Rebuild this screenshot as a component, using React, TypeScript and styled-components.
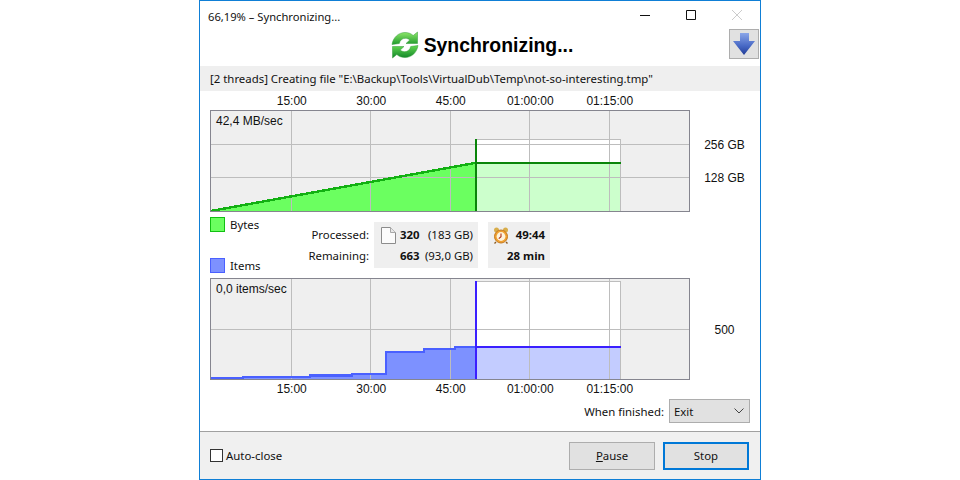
import styled, { createGlobalStyle } from "styled-components"

const GlobalStyle = createGlobalStyle`
  html, body {
    margin: 0;
    background: #ffffff;
  }
  * {
    box-sizing: border-box;
  }
`

const uiFont = `"Noto Sans", "Liberation Sans", sans-serif`
const chartFont = `"Liberation Sans", Arial, sans-serif`

const Window = styled.div`
  width: 562px;
  height: 480px;
  margin-left: 199px;
  border: 1px solid #0f7fd6;
  background: #ffffff;
  display: flex;
  flex-direction: column;
  font: 11.4px ${uiFont};
  color: #111111;
`

const TitleBar = styled.div`
  height: 28px;
  flex: none;
  display: flex;
  align-items: center;
  padding-left: 8px;
`

const TitleText = styled.div`
  flex: 1;
  margin-top: 2px;
  font-size: 11.2px;
`

const WindowButton = styled.div`
  width: 46px;
  height: 27px;
  display: flex;
  align-items: center;
  justify-content: center;
`

const Header = styled.div`
  height: 37px;
  flex: none;
  display: grid;
  grid-template-columns: 1fr auto 1fr;
  align-items: center;
  padding: 0 1px 7px 5px;
`

const Heading = styled.div`
  grid-column: 2;
  display: flex;
  align-items: center;
  gap: 5px;
  margin-top: 2px;
  font: bold 19.4px ${chartFont};
  color: #000000;
`

const DownButton = styled.button`
  grid-column: 3;
  justify-self: end;
  width: 30px;
  height: 30px;
  margin: 0;
  padding: 0;
  border: 1px solid #adadad;
  background: #e1e1e1;
  display: flex;
  align-items: center;
  justify-content: center;
`

const StatusLine = styled.div`
  height: 25px;
  flex: none;
  display: flex;
  align-items: center;
  padding-left: 10px;
  background: #efefef;
`

const Axis = styled.div<{ $shift: number }>`
  height: 19px;
  flex: none;
  display: flex;
  align-items: center;
  padding-left: 52px;
  padding-top: ${({ $shift }) => Math.max($shift, 0)}px;
  padding-bottom: ${({ $shift }) => Math.max(-$shift, 0)}px;
  font: 12px ${chartFont};
`

const AxisTick = styled.div`
  width: 79.5px;
  text-align: center;
`

const ChartRow = styled.div`
  height: 102px;
  flex: none;
  display: flex;
  padding-left: 10px;
  font: 12px ${chartFont};
`

const ChartBox = styled.div`
  width: 480px;
  height: 102px;
  flex: none;
  position: relative;
`

const ChartSvg = styled.svg`
  display: block;
`

const Rate = styled.div`
  position: absolute;
  left: 6px;
  top: 4px;
`

const ScaleColumn = styled.div<{ $top: number; $gap: number }>`
  width: 69px;
  display: flex;
  flex-direction: column;
  align-items: center;
  gap: ${({ $gap }) => $gap}px;
  padding-top: ${({ $top }) => $top}px;
`

const Middle = styled.div`
  height: 66px;
  flex: none;
  display: flex;
  padding-left: 10px;
`

const Legend = styled.div`
  width: 90px;
  flex: none;
  display: flex;
  flex-direction: column;
  gap: 26px;
  padding-top: 5px;
`

const LegendItem = styled.div`
  display: flex;
  align-items: center;
  gap: 5px;
  height: 15px;
`

const Swatch = styled.div<{ $fill: string; $edge: string }>`
  width: 15px;
  height: 15px;
  background: ${({ $fill }) => $fill};
  border: 1px solid ${({ $edge }) => $edge};
`

const StatLabels = styled.div`
  width: 69px;
  flex: none;
  display: flex;
  flex-direction: column;
  align-items: flex-end;
  gap: 5px;
  padding-top: 15px;
`

const StatLabel = styled.div`
  height: 16px;
  line-height: 16px;
`

const Panel = styled.div<{ $width: number; $left: number; $pad: number }>`
  width: ${({ $width }) => $width}px;
  height: 46px;
  margin: 10px 0 0 ${({ $left }) => $left}px;
  background: #efefef;
  display: flex;
  padding: 0 5px 0 ${({ $pad }) => $pad}px;
`

const PanelIcon = styled.div<{ $width: number }>`
  width: ${({ $width }) => $width}px;
  flex: none;
  padding-top: 5px;
`

const PanelRows = styled.div`
  flex: 1;
  display: flex;
  flex-direction: column;
  gap: 5px;
  padding-top: 5px;
`

const PanelRow = styled.div`
  height: 16px;
  line-height: 16px;
  display: flex;
  justify-content: flex-end;
  white-space: nowrap;
`

const Strong = styled.span`
  font-weight: bold;
`

const Size = styled.span`
  margin-left: auto;
`

const FinishRow = styled.div`
  height: 24px;
  flex: none;
  display: flex;
  align-items: center;
  justify-content: flex-end;
  gap: 5px;
  padding-right: 10px;
`

const FinishSelect = styled.div`
  width: 81px;
  height: 24px;
  border: 1px solid #adadad;
  background: #e1e1e1;
  display: flex;
  align-items: center;
  justify-content: space-between;
  padding: 0 5px 0 4px;
`

const Footer = styled.div`
  margin-top: auto;
  height: 48px;
  flex: none;
  border-top: 1px solid #a0a0a0;
  background: #f0f0f0;
  display: flex;
  align-items: center;
  padding: 0 11px 0 10px;
`

const CheckLabel = styled.label`
  display: flex;
  align-items: center;
  gap: 3px;
  margin-right: auto;
`

const CheckBox = styled.span`
  width: 13px;
  height: 13px;
  border: 1px solid #333333;
  background: #ffffff;
`

const FooterButton = styled.button<{ $primary?: boolean }>`
  width: 86px;
  height: 28px;
  margin: 0 0 0 8px;
  padding: 0;
  font: inherit;
  color: #111111;
  background: #e1e1e1;
  border: ${({ $primary }) => ($primary ? "2px solid #0078d7" : "1px solid #adadad")};
`

const Mnemonic = styled.span`
  text-decoration: underline;
`

type Colors = { fill: string; line: string; now: string; future: string }

const bytesColors: Colors = { fill: "#6bff60", line: "#12b012", now: "#0a850a", future: "#ccffcc" }
const itemsColors: Colors = { fill: "#7d91ff", line: "#4a60ff", now: "#3a1fff", future: "#c3ccff" }

const timeLines = [291, 370, 450, 529, 609]
const timeTicks = ["15:00", "30:00", "45:00", "01:00:00", "01:15:00"]

type ChartProps = {
  top: number
  rows: number[]
  futureTop: number
  level: number
  points: string
  colors: Colors
  rate: string
}

// viewBox is set to page pixels so the numbers below can be read off the screenshot
const Chart = ({ top, rows, futureTop, level, points, colors, rate }: ChartProps): JSX.Element => {
  const bottom = top + 101
  return (
    <ChartBox>
      <ChartSvg width={480} height={102} viewBox={`210 ${top} 480 102`} shapeRendering="crispEdges">
        <rect x={210} y={top} width={480} height={102} fill="#efefef" />
        <rect x={476} y={futureTop} width={144} height={bottom - futureTop} fill="#ffffff" />
        <rect x={476} y={level} width={144} height={bottom - level} fill={colors.future} />
        <polygon points={`${points} 475,${bottom} 211,${bottom}`} fill={colors.fill} />
        {rows.map((y) => <rect key={y} x={211} y={y} width={478} height={1} fill="#bdbdbd" />)}
        {timeLines.map((x) => <rect key={x} x={x} y={top} width={1} height={101} fill="#bdbdbd" />)}
        <polyline points={points} fill="none" stroke={colors.line} strokeWidth={2.4} />
        <rect x={476} y={futureTop} width={144} height={1} fill="#bdbdbd" />
        <rect x={620} y={futureTop} width={1} height={bottom - futureTop} fill="#bdbdbd" />
        <rect x={476} y={level - 1} width={145} height={2} fill={colors.now} />
        <rect x={475} y={futureTop} width={2} height={bottom - futureTop} fill={colors.now} />
        <rect x={210.5} y={top + 0.5} width={479} height={101} fill="none" stroke="#85858f" />
      </ChartSvg>
      <Rate>{rate}</Rate>
    </ChartBox>
  )
}

const TimeAxis = ({ shift }: { shift: number }): JSX.Element => (
  <Axis $shift={shift}>
    {timeTicks.map((tick) => <AxisTick key={tick}>{tick}</AxisTick>)}
  </Axis>
)

const SyncIcon = (): JSX.Element => (
  <svg width={28} height={28} viewBox="0 0 28 28">
    <defs>
      <linearGradient id="syncTop" x1="0" y1="0" x2="0" y2="1">
        <stop offset="0" stopColor="#8fe86a" />
        <stop offset="1" stopColor="#1f9a2c" />
      </linearGradient>
      <linearGradient id="syncBottom" x1="0" y1="0" x2="0" y2="1">
        <stop offset="0" stopColor="#63d84f" />
        <stop offset="1" stopColor="#12862a" />
      </linearGradient>
    </defs>
    <path d="M1 13.5C2 6.5 7.5 1.5 14 1.5c3.4 0 6 1.1 8.2 3L26.5 1v11.5H15l3.8-3.6c-1.3-1-2.8-1.6-4.6-1.6-3 0-5.2 2-5.9 5.2z" fill="url(#syncTop)" stroke="#2f9a35" strokeWidth={0.5} />
    <path d="M27 14.5c-1 7-6.5 12-13 12-3.4 0-6-1.1-8.2-3L1.5 27V15.5H13l-3.8 3.6c1.3 1 2.8 1.6 4.6 1.6 3 0 5.2-2 5.9-5.2z" fill="url(#syncBottom)" stroke="#2f9a35" strokeWidth={0.5} />
  </svg>
)

const DownArrow = (): JSX.Element => (
  <svg width={22} height={22} viewBox="0 0 22 22">
    <defs>
      <linearGradient id="arrowFill" x1="0" y1="0" x2="0" y2="1">
        <stop offset="0" stopColor="#8ba6e8" />
        <stop offset="0.6" stopColor="#4667c4" />
        <stop offset="1" stopColor="#223d96" />
      </linearGradient>
    </defs>
    <path d="M7 0h9v8h6L11 22 0 8h7z" fill="url(#arrowFill)" />
  </svg>
)

const FileIcon = (): JSX.Element => (
  <svg width={15} height={17} viewBox="0 0 15 17">
    <path d="M.5.5h9l5 5v11H.5z" fill="#fbfbfb" stroke="#8c8c8c" />
    <path d="M9.5.5v5h5" fill="#e8e8e8" stroke="#a8a8a8" />
  </svg>
)

const ClockIcon = (): JSX.Element => (
  <svg width={16} height={17} viewBox="0 0 16 17">
    <circle cx={3.5} cy={3} r={2.5} fill="#d8ad4a" />
    <circle cx={12.5} cy={3} r={2.5} fill="#d8ad4a" />
    <path d="M3 15l-1.5 1.5M13 15l1.5 1.5" stroke="#8a5a20" strokeWidth={1.4} />
    <circle cx={8} cy={9.5} r={6.5} fill="#f0a030" stroke="#c47a20" />
    <circle cx={8} cy={9.5} r={4.4} fill="#fdf3dc" />
    <path d="M8 6.5v3.2l-2.2 2" fill="none" stroke="#b03018" strokeWidth={1.1} />
  </svg>
)

const Chevron = (): JSX.Element => (
  <svg width={10} height={6} viewBox="0 0 10 6">
    <path d="M.5.5 5 5 9.5.5" fill="none" stroke="#444444" />
  </svg>
)

const App = (): JSX.Element => (
  <>
    <GlobalStyle />
    <Window>
      <TitleBar>
        <TitleText>66,19% – Synchronizing...</TitleText>
        <WindowButton>
          <svg width={10} height={10} viewBox="0 0 10 10"><path d="M0 5.5h10" stroke="#111111" /></svg>
        </WindowButton>
        <WindowButton>
          <svg width={10} height={10} viewBox="0 0 10 10"><path d="M.5.5h9v9h-9z" fill="none" stroke="#111111" /></svg>
        </WindowButton>
        <WindowButton>
          <svg width={10} height={10} viewBox="0 0 10 10"><path d="M0 0l10 10M10 0L0 10" stroke="#cccccc" /></svg>
        </WindowButton>
      </TitleBar>

      <Header>
        <Heading>
          <SyncIcon />
          Synchronizing...
        </Heading>
        <DownButton><DownArrow /></DownButton>
      </Header>

      <StatusLine>[2 threads] Creating file "E:\Backup\Tools\VirtualDub\Temp\not-so-interesting.tmp"</StatusLine>

      <TimeAxis shift={1} />

      <ChartRow>
        <Chart
          top={110}
          rows={[144, 177]}
          futureTop={139}
          level={163}
          points="211,211 475,163"
          colors={bytesColors}
          rate="42,4 MB/sec"
        />
        <ScaleColumn $top={28} $gap={19}>
          <div>256 GB</div>
          <div>128 GB</div>
        </ScaleColumn>
      </ChartRow>

      <Middle>
        <Legend>
          <LegendItem><Swatch $fill="#6bff60" $edge="#12c012" />Bytes</LegendItem>
          <LegendItem><Swatch $fill="#7d91ff" $edge="#4a60ff" />Items</LegendItem>
        </Legend>
        <StatLabels>
          <StatLabel>Processed:</StatLabel>
          <StatLabel>Remaining:</StatLabel>
        </StatLabels>
        <Panel $width={104} $left={5} $pad={7}>
          <PanelIcon $width={19}><FileIcon /></PanelIcon>
          <PanelRows>
            <PanelRow><Strong>320</Strong><Size>(183 GB)</Size></PanelRow>
            <PanelRow><Strong>663</Strong><Size>(93,0 GB)</Size></PanelRow>
          </PanelRows>
        </Panel>
        <Panel $width={62} $left={10} $pad={5}>
          <PanelIcon $width={14}><ClockIcon /></PanelIcon>
          <PanelRows>
            <PanelRow><Strong>49:44</Strong></PanelRow>
            <PanelRow><Strong>28 min</Strong></PanelRow>
          </PanelRows>
        </Panel>
      </Middle>

      <ChartRow>
        <Chart
          top={278}
          rows={[329]}
          futureTop={281}
          level={347}
          points="211,378 243,378 243,377 310,377 310,375.5 352,375.5 352,374 386,374 386,352 424,352 424,349 455,349 455,347 475,347"
          colors={itemsColors}
          rate="0,0 items/sec"
        />
        <ScaleColumn $top={45} $gap={0}>
          <div>500</div>
        </ScaleColumn>
      </ChartRow>

      <TimeAxis shift={-1} />

      <FinishRow>
        When finished:
        <FinishSelect>Exit<Chevron /></FinishSelect>
      </FinishRow>

      <Footer>
        <CheckLabel><CheckBox />Auto-close</CheckLabel>
        <FooterButton><Mnemonic>P</Mnemonic>ause</FooterButton>
        <FooterButton $primary>Stop</FooterButton>
      </Footer>
    </Window>
  </>
)

export default App
